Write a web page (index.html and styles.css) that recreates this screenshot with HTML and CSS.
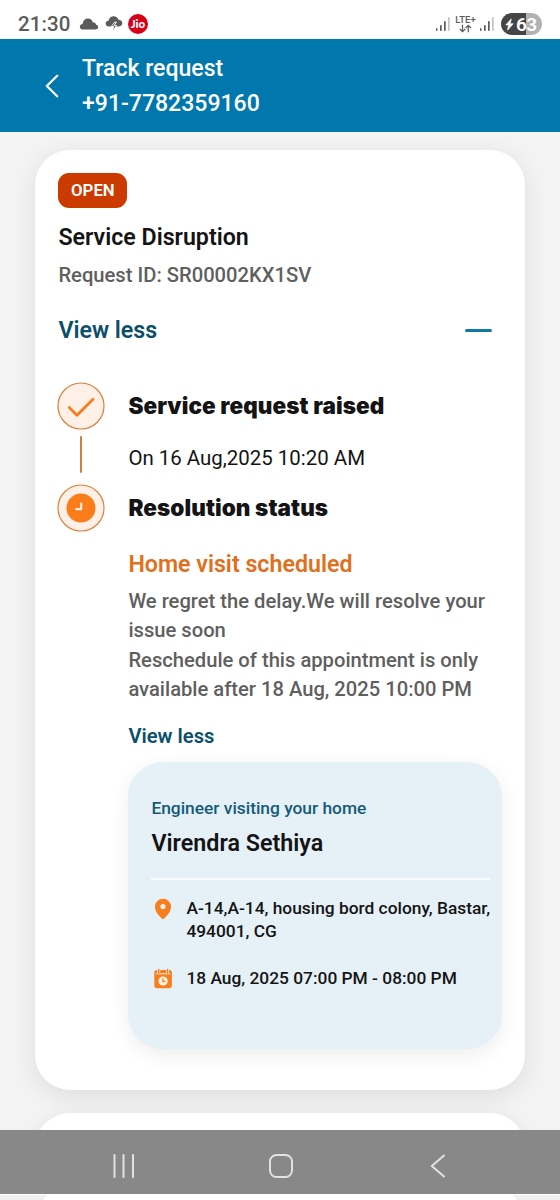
FILE: index.html
```html
<!DOCTYPE html>
<html lang="en">
<head>
<meta charset="utf-8">
<title>Track request</title>
<link rel="stylesheet" href="styles.css">
</head>
<body>
<div class="screen">
  <div class="status">
    <span class="time">21:30</span>
    <svg class="cloud" width="20" height="14" viewBox="0 0 20 14"><path d="M3.6 12.500Q.8 12.300.8 9.600.9 7.200 3.500 7 4.500 1.500 9 1.500q3.700 0 4.700 3.700 3 0 3.500 2.600 2 .5 2 2.300 0 2.400-2.700 2.400z" fill="#5b5b5b"/></svg>
    <svg class="storm" width="18" height="18" viewBox="0 0 18 18"><path d="M4 11.500Q.7 11.400.7 8.500.8 5.900 3.500 5.700 4.500 1.200 8.700 1.200q3.700 0 4.600 3.500 4 .1 4 3.400 0 3.400-3.900 3.400z" fill="#5b5b5b"/><path d="M9.800 7 6.300 11.500h2.400L7.300 16.500l4.300-6H9.200L11.500 7z" fill="#5b5b5b" stroke="#fff" stroke-width=".9"/></svg>
    <span class="jio">Jio</span>
    <span class="grow"></span>
    <svg class="signal" width="15" height="16" viewBox="0 0 15 16"><g fill="#5b5b5b"><rect x="0" y="12" width="1.500" height="3" rx=".7"/><rect x="4" y="9" width="1.700" height="6" rx=".7"/><rect x="8" y="5" width="1.700" height="10" rx=".7"/><rect x="12" y="1" width="1.700" height="14" rx=".7" fill="#c4c4c4"/></g></svg>
    <span class="lte"><span>LTE+</span><svg width="13" height="9" viewBox="0 0 13 9"><path d="M3.500 .8v6.800M.8 5l2.700 2.700L6.200 5M9.300 8.200V1.400M6.600 4l2.700-2.700L12 4" fill="none" stroke="#5b5b5b" stroke-width="1.200"/></svg></span>
    <svg class="signal" width="15" height="16" viewBox="0 0 15 16"><g fill="#5b5b5b"><rect x="0" y="12" width="1.500" height="3" rx=".7"/><rect x="4" y="9" width="1.700" height="6" rx=".7"/><rect x="8" y="5" width="1.700" height="10" rx=".7"/><rect x="12" y="1" width="1.700" height="14" rx=".7" fill="#c4c4c4"/></g></svg>
    <span class="battery"><svg width="9" height="13" viewBox="0 0 9 13"><path d="M6.300.8.8 7h2.700L2.500 12.200 8.300 5.700H5.300z" fill="#fff" stroke="#fff" stroke-width=".6"/></svg><span>63</span></span>
  </div>
  <header class="header">
    <svg class="back" width="16" height="26" viewBox="0 0 16 26"><path d="M13.200 2.800 2.800 13l10.400 10.200" fill="none" stroke="#fff" stroke-width="2.300" stroke-linecap="round" stroke-linejoin="round"/></svg>
    <div class="heading"><div>Track request</div><div class="phone">+91-7782359160</div></div>
  </header>
  <main class="content">
    <section class="card">
      <div class="badge"><span>OPEN</span></div>
      <h1 class="title"><span>Service Disruption</span></h1>
      <div class="request"><span>Request ID: SR00002KX1SV</span></div>
      <div class="toggle"><span>View less</span><i class="minus"></i></div>
      <div class="step">
        <div class="rail">
          <svg width="48" height="48" viewBox="0 0 48 48"><circle cx="24" cy="24" r="23" fill="#fef0e7" stroke="#dd7f38" stroke-width="1.200"/><path d="M12.300 25.500 20 33.200 36 17.200" fill="none" stroke="#f77d1a" stroke-width="2.700" stroke-linecap="round" stroke-linejoin="round"/></svg>
          <i class="line"></i>
        </div>
        <div class="step-body">
          <h2 class="step-title"><span>Service request raised</span></h2>
          <div class="date"><span>On 16 Aug,2025 10:20 AM</span></div>
        </div>
      </div>
      <div class="step">
        <div class="rail">
          <svg width="48" height="48" viewBox="0 0 48 48"><circle cx="24" cy="24" r="23" fill="#fef0e7" stroke="#dd7f38" stroke-width="1.200"/><circle cx="24" cy="24" r="14.500" fill="#fa7d19"/><path d="M24.200 19.500v5.700H19.300" fill="none" stroke="#fff0e2" stroke-width="2.200" stroke-linecap="round" stroke-linejoin="round"/></svg>
        </div>
        <div class="step-body">
          <h2 class="step-title"><span>Resolution status</span></h2>
          <h3 class="visit"><span>Home visit scheduled</span></h3>
          <p class="message">We regret the delay.We will resolve your<br>issue soon<br>Reschedule of this appointment is only<br>available after 18 Aug, 2025 10:00 PM</p>
          <div class="less"><span>View less</span></div>
          <div class="engineer">
            <div class="label"><span>Engineer visiting your home</span></div>
            <div class="name"><span>Virendra Sethiya</span></div>
            <div class="detail address">
              <svg width="24" height="24" viewBox="0 0 24 24"><path fill-rule="evenodd" d="M12 1.700a8 8 0 0 0-8 8c0 4.700 3.600 8.500 6.500 11.500.9.900 2.100.9 3 0C16.400 18.200 20 14.400 20 9.700a8 8 0 0 0-8-8zm0 5.300a2.600 2.600 0 1 1 0 5.200 2.600 2.600 0 0 1 0-5.200z" fill="#f87d1c"/></svg>
              <span>A-14,A-14, housing bord colony, Bastar,<br>494001, CG</span>
            </div>
            <div class="detail slot">
              <svg width="24" height="24" viewBox="0 0 24 24"><rect x="3.300" y="3" width="17.600" height="18.300" rx="2.700" fill="#f87d1c"/><path d="M4.800 6.800h14.600" stroke="#fff1e3" stroke-width="1"/><path d="M7.700 2.500v3.700M16.500 2.500v3.700" stroke="#e5f0f7" stroke-width="3"/><path d="M7.700 2.500v3.500M16.500 2.500v3.500" stroke="#f87d1c" stroke-width="1.500" stroke-linecap="round"/><circle cx="12.100" cy="14" r="4.600" fill="#fff4e8"/><path d="M12 11.500v3h2.400" fill="none" stroke="#f87d1c" stroke-width="1.400"/></svg>
              <span>18 Aug, 2025 07:00 PM - 08:00 PM</span>
            </div>
          </div>
        </div>
      </div>
    </section>
    <section class="card next"></section>
  </main>
  <nav class="nav">
    <svg width="24" height="26" viewBox="0 0 24 26"><path d="M2.500 2v22M11.500 2v22M21 2v22" stroke="#e2e2e2" stroke-width="2" stroke-linecap="round"/></svg>
    <svg class="home" width="26" height="26" viewBox="0 0 26 26"><rect x="2" y="2" width="22" height="22" rx="6.500" fill="none" stroke="#e2e2e2" stroke-width="2"/></svg>
    <svg width="18" height="26" viewBox="0 0 18 26"><path d="M15 2.500 2.800 13 15 23.500" fill="none" stroke="#e2e2e2" stroke-width="2" stroke-linecap="round" stroke-linejoin="round"/></svg>
  </nav>
  <div class="peek"><i></i></div>
</div>
</body>
</html>
```

FILE: styles.css
```css
* { box-sizing: border-box; }
body { margin: 0; background: #f3f3f3; font-family: Roboto, "Liberation Sans", sans-serif; font-weight: 500; color: #141414; }
h1, h2, h3, p { margin: 0; }
svg { display: block; flex: none; }
.screen { width: 560px; height: 1200px; overflow: hidden; display: flex; flex-direction: column; }
.status { height: 39px; background: #fff; display: flex; align-items: center; padding: 9px 18px 0; flex: none; color: #5b5b5b; }
.time { width: 54px; font-size: 20.500px; letter-spacing: .1px; white-space: nowrap; }
.cloud { margin-left: 7px; }
.storm { margin-left: 6px; }
.jio { margin-left: 5px; width: 20px; height: 20px; border-radius: 50%; background: #d9001b; color: #fff; font: 900 11.500px/20px Lato, sans-serif; text-align: center; }
.grow { flex: 1; }
.lte { width: 21px; margin: 0 4px 0 4px; display: flex; flex-direction: column; align-items: center; font-size: 9.500px; line-height: 9px; }
.battery { width: 41px; height: 22px; margin-left: 6px; border-radius: 11px; background: linear-gradient(90deg, #454545 60%, #b2b2b2 60%); color: #fff; display: flex; align-items: center; padding-left: 4px; gap: 2px; font-size: 19px; font-weight: 600; letter-spacing: -.7px; }
.header { height: 93px; flex: none; background: #0077ad; display: flex; align-items: center; color: #fff; }
.back { margin-left: 44px; }
.heading { margin-left: 22px; font-size: 23.050px; line-height: 35px; font-weight: 500; white-space: nowrap; }
.content { flex: 1; min-height: 0; overflow: hidden; padding: 18px 35px 0; }
.card { height: 940px; border-radius: 35px; background: #fff; box-shadow: 0 6px 24px rgba(0,0,0,.09); padding: 23px 23px 0 23.400px; }
.next { height: 120px; margin-top: 23px; }
.badge { width: 69px; height: 35px; border-radius: 11px; background: #cb3b00; color: #fff; text-align: center; font-size: 16.800px; line-height: 35px; font-weight: 600; }
.title { margin-top: 13px; font-size: 23.200px; line-height: 32px; font-weight: 600; }
.request { margin-top: 8px; font-size: 20.200px; line-height: 28px; font-weight: 500; color: #5f5f5f; }
.toggle { margin-top: 24px; display: flex; justify-content: space-between; align-items: center; padding-right: 10px; font-size: 23.200px; line-height: 34px; font-weight: 600; color: #0a4f6c; }
.minus { width: 27px; height: 3px; background: #0f79a4; border-radius: 2px; }
.step { display: flex; margin-top: 35px; height: 102px; }
.step + .step { margin-top: 0; height: auto; }
.rail { width: 70px; flex: none; display: flex; flex-direction: column; }
.rail svg { margin-left: -1px; }
.line { width: 2px; height: 37px; margin: 6px 0 0 22px; background: #d87d38; border-radius: 1px; }
.step-body { flex: 1; white-space: nowrap; }
.step-title { padding-top: 1px; font-family: Inter, Roboto, sans-serif; font-size: 22.500px; line-height: 46px; font-weight: 900; letter-spacing: .08px; }
.date { margin-top: 15px; font-size: 20.450px; line-height: 28px; font-weight: 400; }
.visit { margin-top: 17px; font-size: 23.200px; line-height: 32px; font-weight: 600; color: #e1701d; }
.message { margin-top: 7px; font-size: 20.180px; line-height: 29.300px; font-weight: 500; color: #5f5f5f; }
.less { margin-top: 17.500px; font-size: 20.200px; line-height: 28px; font-weight: 600; color: #0a4f6c; }
.engineer { width: 373.500px; height: 287px; margin-top: 12px; border-radius: 35px; background: #e5f0f7; box-shadow: 0 6px 20px rgba(0,0,0,.07); padding: 33px 12px 0 23px; }
.label { font-size: 17.350px; line-height: 26px; font-weight: 500; color: #155b78; }
.name { height: 59px; padding-top: 6px; font-size: 23.300px; line-height: 32px; font-weight: 600; border-bottom: 2px solid #f8fcff; }
.detail { display: flex; align-items: flex-start; gap: 11px; font-size: 17.350px; line-height: 23.300px; font-weight: 500; }
.address { margin-top: 17.500px; }
.slot { margin-top: 23px; }
.nav { height: 64px; flex: none; background: #888; display: flex; align-items: center; justify-content: space-between; padding: 8px 113px 0 112px; }
.home { margin-right: 3px; }
.peek { height: 6px; flex: none; background: #f0f0f0; border-top: 1px solid #fff; padding: 0 44px; }
.peek i { display: block; height: 5px; background: #fff; border-radius: 8px 8px 0 0; }
```
